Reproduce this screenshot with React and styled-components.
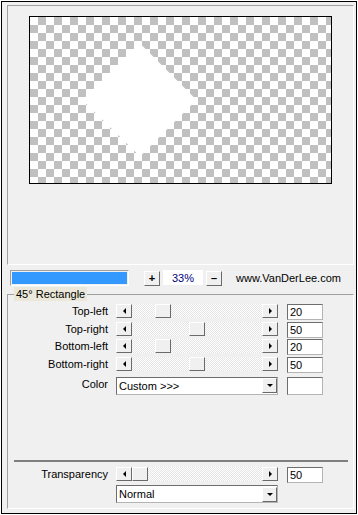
import React from 'react'
import styled, { createGlobalStyle } from 'styled-components'

const Global = createGlobalStyle`
  body {
    margin: 0;
    background: #fff;
    font-family: "Liberation Sans", Arial, sans-serif;
    font-size: 11px;
    color: #000;
  }
`

const Frame = styled.div`
  box-sizing: border-box;
  margin: 1px 0 0 1px;
  width: 356px;
  height: 513px;
  border: 1px solid #000;
  background: #f0f0f0;
  display: flex;
  flex-direction: column;
  padding: 3px 2px 0 5px;
`

const PreviewPanel = styled.div`
  box-sizing: border-box;
  height: 260px;
  flex: none;
  border: 1px solid;
  border-color: #a0a0a0 #fff #fff #a0a0a0;
  padding: 10px 0 0 21px;
`

const Checker = styled.div`
  box-sizing: border-box;
  width: 303px;
  height: 168px;
  border: 1px solid #000;
  background-color: #fff;
  background-image: repeating-conic-gradient(#c0c0c0 0 25%, #fff 0 50%);
  background-size: 16px 16px;
  overflow: hidden;
`

const Shape = styled.svg`
  display: block;
`

const ProgressRow = styled.div`
  height: 22px;
  flex: none;
  display: flex;
  align-items: flex-start;
  padding: 5px 0 0 3px;
  box-sizing: border-box;
`

const Progress = styled.div`
  box-sizing: border-box;
  width: 119px;
  height: 16px;
  border: 1px solid;
  border-color: #a0a0a0 #fff #fff #a0a0a0;
  padding: 1px;
  div {
    height: 100%;
    background: #3399ff;
  }
`

const Button = styled.div`
  box-sizing: border-box;
  width: ${p => p.$w || 16}px;
  height: ${p => p.$h || 15}px;
  margin-left: ${p => p.$ml || 0}px;
  margin-top: ${p => p.$mt || 0}px;
  border: 1px solid;
  border-color: #fff #6a6a6a #6a6a6a #fff;
  background: #f0f0f0;
  display: flex;
  align-items: center;
  justify-content: center;
  font-weight: bold;
  font-size: 11px;
  line-height: 1;
  flex: none;
`

const Zoom = styled.div`
  margin-left: 3px;
  width: 40px;
  height: 15px;
  background: #fff;
  color: #000080;
  display: flex;
  align-items: center;
  padding-left: 9px;
  box-sizing: border-box;
`

const Site = styled.div`
  margin-left: 14px;
  margin-top: 2px;
  color: #000;
`

const Group = styled.fieldset`
  margin: 0 0 4px;
  flex: 1;
  border: 1px solid;
  border-color: #a0a0a0 #fff #fff #a0a0a0;
  padding: 0;
  min-width: 0;
  display: flex;
  flex-direction: column;
`

const Legend = styled.legend`
  margin-left: 6px;
  padding: 0 2px;
  background: #ebe8d9;
  font-size: 11px;
  line-height: 14px;
`

const Rows = styled.div`
  display: flex;
  flex-direction: column;
  gap: 1.5px;
  margin-top: 3px;
`

const Row = styled.div`
  display: flex;
  align-items: flex-start;
  height: ${p => p.$h || 16}px;
  margin-top: ${p => p.$mt || 0}px;
`

const Label = styled.div`
  width: 100px;
  text-align: right;
  line-height: 15px;
  margin-right: 8px;
`

const Scroll = styled.div`
  display: flex;
  width: 162px;
  height: 14px;
  flex: none;
`

const Track = styled.div`
  position: relative;
  flex: 1;
  background: repeating-conic-gradient(#fff 0 25%, #e4e4e4 0 50%) 0 0 / 2px 2px;
`

const Thumb = styled(Button)`
  position: absolute;
  top: 0;
  height: 14px;
`

const LeftArrow = styled.span`
  width: 0;
  height: 0;
  border-top: 3px solid transparent;
  border-bottom: 3px solid transparent;
  border-right: 3px solid #000;
`

const RightArrow = styled.span`
  width: 0;
  height: 0;
  border-top: 3px solid transparent;
  border-bottom: 3px solid transparent;
  border-left: 3px solid #000;
`

const DownArrow = styled.span`
  width: 0;
  height: 0;
  border-left: 3px solid transparent;
  border-right: 3px solid transparent;
  border-top: 3px solid #000;
`

const Input = styled.div`
  box-sizing: border-box;
  margin-left: 9px;
  width: 36px;
  height: ${p => p.$h || 16}px;
  background: #fff;
  border: 1px solid;
  border-color: #6d6d6d #b4b4b4 #b4b4b4 #6d6d6d;
  padding-left: 2px;
  line-height: 14px;
`

const Select = styled.div`
  box-sizing: border-box;
  width: 162px;
  height: 18px;
  margin-left: ${p => p.$ml || 0}px;
  background: #fff;
  border: 1px solid;
  border-color: #6d6d6d #b4b4b4 #b4b4b4 #6d6d6d;
  display: flex;
  align-items: center;
  padding-left: 2px;
  span.txt {
    flex: 1;
  }
`

const Spacer = styled.div`
  flex: 1;
`

const Separator = styled.div`
  margin: 0 5px 0 6px;
  height: 2px;
  background: #7f7f7f;
`

const corners = [
  { name: 'Top-left', value: 20 },
  { name: 'Top-right', value: 50 },
  { name: 'Bottom-left', value: 20 },
  { name: 'Bottom-right', value: 50 },
]

function Slider({ value, min = 0, max = 100 }) {
  const pos = Math.round(((value - min) / (max - min)) * 114)
  return (
    <Scroll>
      <Button $w={16} $h={14}><LeftArrow /></Button>
      <Track>
        <Thumb $w={16} style={{ left: pos }} />
      </Track>
      <Button $w={16} $h={14}><RightArrow /></Button>
    </Scroll>
  )
}

function Dropdown({ text, ml }) {
  return (
    <Select $ml={ml}>
      <span className="txt">{text}</span>
      <Button $w={15} $h={15}><DownArrow /></Button>
    </Select>
  )
}

export default function App() {
  return (
    <>
      <Global />
      <Frame>
        <PreviewPanel>
          <Checker>
            <Shape width="301" height="166">
              <polygon
                points="110,32 161,83 110,134 58,83"
                fill="#fff"
                stroke="#fff"
                strokeWidth="8"
                strokeLinejoin="round"
              />
            </Shape>
          </Checker>
        </PreviewPanel>

        <ProgressRow>
          <Progress><div /></Progress>
          <Button $ml={15} $mt={1}>+</Button>
          <Zoom>33%</Zoom>
          <Button $ml={3} $mt={1}>–</Button>
          <Site>www.VanDerLee.com</Site>
        </ProgressRow>

        <Group>
          <Legend>45° Rectangle</Legend>
          <Rows>
            {corners.map(c => (
              <Row key={c.name}>
                <Label>{c.name}</Label>
                <Slider value={c.value} />
                <Input>{c.value}</Input>
              </Row>
            ))}
          </Rows>
          <Row $h={18} $mt={4}>
            <Label>Color</Label>
            <Dropdown text="Custom >>>" />
            <Input $h={18} />
          </Row>
          <Spacer />
          <Separator />
          <Row $mt={5}>
            <Label>Transparency</Label>
            <Slider value={50} min={50} max={100} />
            <Input>50</Input>
          </Row>
          <Row $h={18} $mt={2}>
            <Dropdown text="Normal" ml={108} />
          </Row>
          <Spacer style={{ flex: 'none', height: 5 }} />
        </Group>
      </Frame>
    </>
  )
}
